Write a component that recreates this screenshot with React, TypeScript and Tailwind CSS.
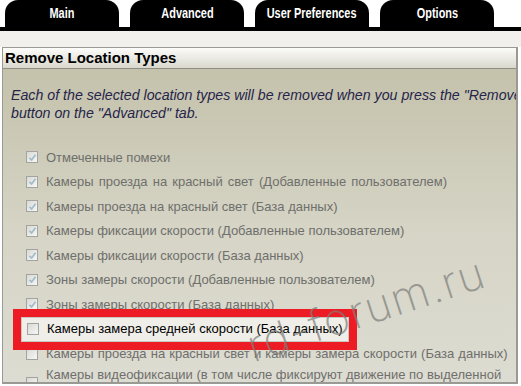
import { ReactNode } from "react";

type Item = { label: string; checked: boolean; active?: boolean; spacing?: string };

const items: Item[] = [
  { label: "Отмеченные помехи", checked: true },
  { label: "Камеры проезда на красный свет (Добавленные пользователем)", checked: true, spacing: "[word-spacing:1.5px]" },
  { label: "Камеры проезда на красный свет (База данных)", checked: true },
  { label: "Камеры фиксации скорости (Добавленные пользователем)", checked: true },
  { label: "Камеры фиксации скорости (База данных)", checked: true },
  { label: "Зоны замеры скорости (Добавленные пользователем)", checked: true },
  { label: "Зоны замеры скорости (База данных)", checked: true },
  { label: "Камеры замера средней скорости (База данных)", checked: false, active: true },
  { label: "Камеры проезда на красный свет и камеры замера скорости (База данных)", checked: false, spacing: "[word-spacing:0.5px]" },
];

const tabs = ["Main", "Advanced", "User Preferences", "Options"];

function Checkbox({ checked }: { checked: boolean }) {
  return (
    <span className="flex h-[12px] w-[12px] shrink-0 items-center justify-center border border-[#a3a3a0] bg-gradient-to-br from-[#d9d9d6] to-[#f7f7f5]">
      {checked && (
        <svg width="9" height="9" viewBox="0 0 9 9">
          <path d="M1.5 4.8 L3.6 7 L7.5 1.8" fill="none" stroke="#9fbccb" strokeWidth="1.7" />
        </svg>
      )}
    </span>
  );
}

function Row({ item }: { item: Item }) {
  const row = (
    <div
      className={
        item.active
          ? "flex h-[25px] w-[328px] items-center gap-[8px] border border-[#c9c8bf] bg-[#efeee8] pl-[5px] text-black"
          : "flex h-[24.5px] items-center gap-[8px] pl-[23px] text-[#6f6f6c]"
      }
    >
      <Checkbox checked={item.checked} />
      <span className={`whitespace-nowrap ${item.spacing ?? ""}`}>{item.label}</span>
    </div>
  );
  if (!item.active) return row;
  return (
    <div className="relative ml-[18px] w-[328px]">
      {row}
      <div className="pointer-events-none absolute -bottom-[8px] -left-[8px] -right-[8px] -top-[8px] border-[8px] border-[#ed1c24]" />
    </div>
  );
}

function Tab({ children }: { children: ReactNode }) {
  return (
    <div className="flex h-[27px] w-[114px] items-center justify-center rounded-t-[13px] bg-black pb-[1px]">
      <span className="scale-x-[0.78] whitespace-nowrap text-[14px] font-bold text-white">{children}</span>
    </div>
  );
}

export default function App() {
  return (
    <div
      className="relative h-[386px] w-[521px] overflow-hidden bg-white"
      style={{ fontFamily: '"Liberation Sans", Arial, sans-serif' }}
    >
      {/* tabs */}
      <div className="flex gap-[11px] pl-[5px]">
        {tabs.map((t) => (
          <Tab key={t}>{t}</Tab>
        ))}
      </div>
      <div className="h-[4px] bg-black" />
      <div className="h-[16px] bg-[#f1f0ec]" />

      {/* panel */}
      <div className="ml-[2px] w-[516px] border-b-2 border-l border-r-2 border-t border-[#9a9a94]">
        <div className="h-[21px] border-b border-[#8e8d86] bg-gradient-to-b from-[#fcfcfa] to-[#dad8cd] pl-[2px] text-[15px] font-bold leading-[20px] text-black">
          Remove Location Types
        </div>
        <div className="h-[313px] overflow-hidden bg-gradient-to-b from-[#c4c2ab] via-[#d5d4c5] to-[#dddcd2]">
          <p className="whitespace-nowrap px-[8px] pt-[17px] text-[14.2px] italic leading-[18px] text-[#25244a]">
            Each of the selected location types will be removed when you press the "Remove"
            <br />
            button on the "Advanced" tab.
          </p>
          <div className="mt-[23px] text-[13px]">
            {items.map((it) => (
              <Row key={it.label} item={it} />
            ))}
            <div className="flex items-center gap-[8px] pl-[23px] leading-[17px] text-[#6f6f6c]">
              <Checkbox checked={false} />
              <span className="w-[480px]">
                Камеры видеофиксации (в том числе фиксируют движение по выделенной полосе)
              </span>
            </div>
          </div>
        </div>
      </div>

      {/* watermark */}
      <div
        className="pointer-events-none absolute left-[221px] top-[285px] w-[290px] -rotate-[18deg] whitespace-nowrap text-center text-[44px] font-extralight leading-[48px] tracking-[1.5px] text-[#7d7d7a] opacity-70"
        style={{ fontFamily: "Inter, sans-serif" }}
      >
        rd-forum.ru
      </div>
    </div>
  );
}
